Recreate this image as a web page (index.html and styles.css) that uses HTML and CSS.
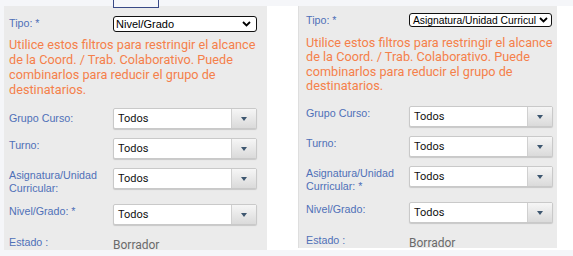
FILE: index.html
```html
<!DOCTYPE html>
<html lang="es">
<head>
<meta charset="utf-8">
<title>Filtros</title>
<link rel="stylesheet" href="styles.css">
</head>
<body>
<div class="strip">
  <section class="panel panel-left">
    <div class="stub"></div>
    <div class="row row-tipo">
      <div class="label">Tipo: *</div>
      <div class="native"><span>Nivel/Grado</span><svg class="chev" width="9" height="6" viewBox="0 0 9 6"><polyline points="1,1 4.5,4.5 8,1" fill="none" stroke="#000" stroke-width="1.8"/></svg></div>
    </div>
    <p class="note">Utilice estos filtros para restringir el alcance<br>de la Coord. / Trab. Colaborativo. Puede<br>combinarlos para reducir el grupo de<br>destinatarios.</p>
    <div class="row field">
      <div class="label label-low">Grupo Curso:</div>
      <div class="combo"><span class="combo-text">Todos</span><span class="combo-btn"><i class="tri"></i></span></div>
    </div>
    <div class="row field">
      <div class="label">Turno:</div>
      <div class="combo"><span class="combo-text">Todos</span><span class="combo-btn"><i class="tri"></i></span></div>
    </div>
    <div class="row field">
      <div class="label">Asignatura/Unidad<br>Curricular:</div>
      <div class="combo"><span class="combo-text">Todos</span><span class="combo-btn"><i class="tri"></i></span></div>
    </div>
    <div class="row field">
      <div class="label">Nivel/Grado: *</div>
      <div class="combo"><span class="combo-text">Todos</span><span class="combo-btn"><i class="tri"></i></span></div>
    </div>
    <div class="row estado">
      <div class="label">Estado :</div>
      <div class="value">Borrador</div>
    </div>
  </section>

  <section class="panel panel-right">
    <div class="row row-tipo">
      <div class="label">Tipo: *</div>
      <div class="native"><span class="native-text">Asignatura/Unidad Curricul</span><svg class="chev" width="9" height="6" viewBox="0 0 9 6"><polyline points="1,1 4.5,4.5 8,1" fill="none" stroke="#000" stroke-width="1.8"/></svg></div>
    </div>
    <p class="note">Utilice estos filtros para restringir el alcance<br>de la Coord. / Trab. Colaborativo. Puede<br>combinarlos para reducir el grupo de<br>destinatarios.</p>
    <div class="row field">
      <div class="label">Grupo Curso:</div>
      <div class="combo"><span class="combo-text">Todos</span><span class="combo-btn"><i class="tri"></i></span></div>
    </div>
    <div class="row field">
      <div class="label">Turno:</div>
      <div class="combo"><span class="combo-text">Todos</span><span class="combo-btn"><i class="tri"></i></span></div>
    </div>
    <div class="row field">
      <div class="label">Asignatura/Unidad<br>Curricular: *</div>
      <div class="combo"><span class="combo-text">Todos</span><span class="combo-btn"><i class="tri"></i></span></div>
    </div>
    <div class="row field">
      <div class="label">Nivel/Grado:</div>
      <div class="combo"><span class="combo-text">Todos</span><span class="combo-btn"><i class="tri"></i></span></div>
    </div>
    <div class="row estado">
      <div class="label">Estado :</div>
      <div class="value">Borrador</div>
    </div>
  </section>
</div>
</body>
</html>
```

FILE: styles.css
```css
* { box-sizing: border-box; }
html, body { margin: 0; padding: 0; }
body {
  width: 573px;
  height: 256px;
  overflow: hidden;
  background: #f5f6f9;
  font-family: "Liberation Sans", Arial, sans-serif;
}
.strip {
  display: flex;
  align-items: flex-start;
  margin: 6px 0 0 4px;
  height: 244px;
  background: #ffffff;
}
.panel {
  position: relative;
  background: #ebebeb;
  flex: none;
}
.panel-left {
  width: 263px;
  height: 244px;
  padding: 10px 0 0 5px;
}
.panel-right {
  width: 259px;
  height: 242px;
  margin-left: 31px;
  padding: 7px 0 0 7px;
  border-left: 1px solid #dedede;
}
.stub {
  position: absolute;
  left: 109px;
  top: -7px;
  width: 46px;
  height: 9px;
  border: 1px solid #3a4a86;
  border-top: none;
  background: #f6f7fa;
}
.row {
  display: flex;
  align-items: flex-start;
}
.label {
  width: 104px;
  flex: none;
  padding-top: 1px;
  font-size: 10.7px;
  line-height: 13px;
  color: #4f70b8;
}
.panel-right .label { width: 103px; }
.label-low { padding-top: 4px; }

.native {
  width: 144px;
  height: 16px;
  border: 1.5px solid #111;
  border-radius: 3px;
  background: #fff;
  display: flex;
  align-items: center;
  justify-content: space-between;
  padding: 0 5px 0 2px;
  font-size: 11px;
  color: #000;
  white-space: nowrap;
  overflow: hidden;
}
.panel-right .native {
  width: 143px;
  height: 14px;
  font-size: 10.3px;
  padding: 0 3px 0 3px;
}
.chev { flex: none; }

.note {
  margin: 5px 0 11px;
  font-family: Roboto, "Liberation Sans", sans-serif;
  font-size: 12.7px;
  line-height: 15px;
  color: #f5804a;
  white-space: nowrap;
}
.panel-right .note {
  margin: 9px 0 13px;
  line-height: 14.3px;
}

.field { margin-bottom: 9px; }
.combo {
  width: 144px;
  height: 21px;
  display: flex;
  background: #fff;
  border: 1px solid #c9c9c9;
  border-radius: 2px;
  box-shadow: 0 1px 1px rgba(0, 0, 0, 0.15);
}
.combo-text {
  flex: 1;
  padding-left: 4px;
  font-family: Roboto, "Liberation Sans", sans-serif;
  font-size: 11px;
  line-height: 19px;
  color: #111;
}
.combo-btn {
  width: 25px;
  border-left: 1px solid #d0d0d0;
  background: linear-gradient(#f6f6f6, #dadada);
  display: flex;
  align-items: center;
  justify-content: center;
}
.tri {
  width: 0;
  height: 0;
  border-left: 3.5px solid transparent;
  border-right: 3.5px solid transparent;
  border-top: 4px solid #3e5770;
}
.estado .label { padding-top: 2px; }
.value {
  padding-top: 4px;
  font-family: Roboto, "Liberation Sans", sans-serif;
  font-size: 12px;
  line-height: 14px;
  color: #6a6a6a;
}
```
